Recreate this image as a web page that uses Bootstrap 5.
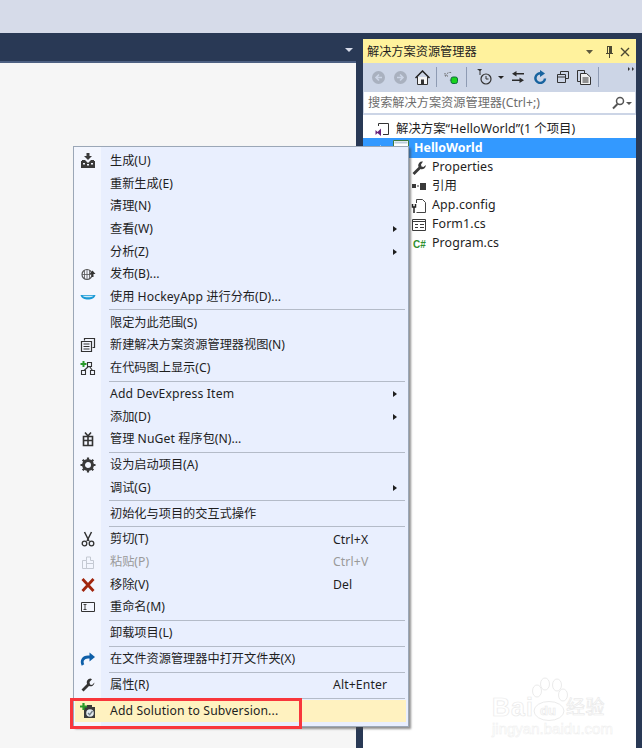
<!DOCTYPE html>
<html lang="zh"><head><meta charset="utf-8"><title>Solution Explorer</title>
<link href="https://cdn.jsdelivr.net/npm/bootstrap@5.3.0/dist/css/bootstrap.min.css" rel="stylesheet">
<style>
html,body{height:748px;width:642px;overflow:hidden;margin:0;background:#293955}
body{font-family:"Noto Sans","Noto Sans CJK SC",sans-serif;font-size:12.2px;color:#1e1e1e;position:relative}
.lat{letter-spacing:.13px}
.top-chrome{height:33px;background:#d6dbe9}
.work{height:715px}
.doc-side{width:356px;margin-right:7px;flex:none}
.doc-tabs{height:27.5px;padding:15px 3px 0 0}
.doc-strip{height:2px;background:#4d6082}
.doc-body{background:#f6f6f6}
.caret-d{width:0;height:0;border-left:4px solid transparent;border-right:4px solid transparent;border-top:4px solid #d6dbe9}
.sol{width:273px;margin:6px 0 0 0;background:#fff;flex:none}
.sol-title{height:24px;background:#fff29d;padding:2px 5px 0 4px;color:#1e1e1e}
.sol-tools{height:28px;background:#ccd5e6;padding:0 0 0 9px}
.sol-tools svg{flex:none}
.tsep{width:1px;height:20px;background:#8e9bb3;flex:none}
.ml-6{margin-left:6px}.ml-7{margin-left:7px}.ml-8{margin-left:8px}.ml-9{margin-left:9px}.ml-10{margin-left:10px}
.grip{align-self:flex-start;margin:4px 2px 0 auto}
.sol-search{height:24px;background:#fff;border:solid #ccd5e6;border-width:1px 1px 2px;padding:1px 2px 0 4px;color:#6d6d6d}
.tree{padding-top:4px}
.trow{height:19px;padding-left:48px;white-space:nowrap;gap:5px;font-size:12.4px}
.trow .lat{letter-spacing:.1px}
.trow.lvl1{padding-left:12px;gap:6px;padding-top:1px}
.trow.sel{background:#3399ff;color:#fff;font-weight:700;padding-left:12px;height:20px}
.trow.sel .lat{letter-spacing:0}
.sel-gap{margin-right:7px}
.ctx{position:absolute;left:73px;top:146px;width:336px;height:581px;background:#e9effe;border:1px solid #9ba7b7;box-shadow:2px 2px 2px rgba(70,70,70,.6);padding:3px 0 0 0}
.ctx::before{content:"";position:absolute;left:0;top:0;bottom:0;width:27px;background:#f3f6fe}
.mi{position:relative;height:22.64px;padding-left:36px;white-space:nowrap;color:#1e1e1e}
.mi .ic{position:absolute;left:6px;top:3px;width:16px;height:16px}
.mi .key{position:absolute;left:259px;top:50%;transform:translateY(-50%)}
.mi .arr{position:absolute;right:11px;top:50%;transform:translateY(-50%);width:0;height:0;border-top:3.5px solid transparent;border-bottom:3.5px solid transparent;border-left:4px solid #1e1e1e}
.mi.off{color:#9a9a9a}
.mi.hot{background:#fff2c0;margin:0 2px 0 1px;padding-left:35px}
.mi.hot .ic{left:5px}
.msep{height:3.28px;padding-top:1px;margin-left:35px;margin-right:3px;position:relative}
.msep::after{content:"";display:block;height:1px;background:#b4bbc8}
.redbox{position:absolute;left:70px;top:698px;width:232px;height:31px;border:3px solid #f8363c;pointer-events:none}
.wm{position:absolute;left:485px;top:675px;width:130px;height:65px;color:#fff}
.wm svg{position:absolute;left:0;top:0}
.wm span{position:absolute;line-height:1;white-space:nowrap;-webkit-text-stroke:.7px #eaeaea}
.wm-bai{left:7px;top:20px;font:700 25px "Liberation Sans",sans-serif;letter-spacing:1px}
.wm-du{left:55px;top:29px;font:700 13px "Liberation Sans",sans-serif}
.wm-jy{left:81px;top:21px;font:400 19px "Noto Sans CJK SC",sans-serif;letter-spacing:.5px}
.wm-url{left:7px;top:46px;font:400 15px "Liberation Sans",sans-serif}
.wm span.wm-url{-webkit-text-stroke:.5px #eeeeee}
</style></head><body>
<div class="top-chrome"></div>
<div class="work d-flex">
  <div class="doc-side d-flex flex-column">
    <div class="doc-tabs d-flex justify-content-end"><span class="caret-d"></span></div>
    <div class="doc-strip"></div>
    <div class="doc-body flex-grow-1"></div>
  </div>
  <div class="sol d-flex flex-column">
    <div class="sol-title d-flex align-items-center">
      <span class="flex-grow-1">解决方案资源管理器</span>
      <svg width="46" height="14" viewBox="0 0 46 14"><path d="M1 5h7l-3.500 4z" fill="#5e5a3e"/><path d="M22 1h5v7h1v1h-3v4h-1V9h-3V8h1zM23 2v6h1V2z" fill="#4d4a33"/><path d="M36 3l8 8M44 3l-8 8" stroke="#4d4a33" stroke-width="1.400"/></svg>
    </div>
    <div class="sol-tools d-flex align-items-center">
      <svg width="13" height="13" viewBox="0 0 13 13"><circle cx="6.500" cy="6.500" r="6.500" fill="#a9b1bf"/><path d="M7 3.500L4 6.500 7 9.500M4.500 6.500H10" stroke="#ccd5e6" stroke-width="1.600" fill="none"/></svg>
      <svg class="ml-9" width="13" height="13" viewBox="0 0 13 13"><circle cx="6.500" cy="6.500" r="6.500" fill="#a9b1bf"/><path d="M6 3.500l3 3-3 3M8.500 6.500H3" stroke="#ccd5e6" stroke-width="1.600" fill="none"/></svg>
      <svg class="ml-8" width="15" height="15" viewBox="0 0 15 15"><path d="M2.500 7v7.500h10V7" fill="#f5f5f5" stroke="#333"/><path d="M6 14.500V9.500h3v5" fill="#333"/><path d="M.5 8L7.500 1l7 7" fill="none" stroke="#222" stroke-width="1.500"/></svg>
      <span class="tsep ml-6"></span>
      <svg class="ml-7" width="14" height="15" viewBox="0 0 14 15"><path d="M2 6a4 4 0 0 1 6-3M1 3v3h3M9 8a3 3 0 0 1-4 2" fill="none" stroke="#666" stroke-dasharray="1.500 1"/><rect x="7" y="7" width="6.500" height="6.500" rx="2" fill="#19d31c" stroke="#0c6d3c"/></svg>
      <span class="tsep ml-8"></span>
      <svg class="ml-10" width="15" height="16" viewBox="0 0 15 16"><circle cx="9" cy="10" r="5" fill="none" stroke="#333" stroke-width="1.200"/><path d="M9 7v3h2.500" stroke="#333" fill="none"/><path d="M0 0h5L3.500 2v4h-1V2z" fill="#333"/></svg>
      <svg class="ml-6" width="6" height="3" viewBox="0 0 6 3"><path d="M0 0h6L3 3z" fill="#222"/></svg>
      <svg class="ml-8" width="12" height="12" viewBox="0 0 12 12"><path d="M4.500 0v2H12v1.500H4.500v2L0 2.700zM7.500 6.500v2H0V10h7.500v2L12 9.200z" fill="#2b2b2b"/></svg>
      <svg class="ml-10" width="13" height="14" viewBox="0 0 13 14"><path d="M11 8.500a4.800 4.800 0 1 1-3.500-5" fill="none" stroke="#17639f" stroke-width="2.500"/><path d="M6 0v7l5-3.500z" fill="#17639f"/></svg>
      <svg class="ml-10" width="12" height="12" viewBox="0 0 12 12"><path d="M3.500 3V.5h8v7H9M.5 3.500h8v8h-8zM.5 6h8" fill="none" stroke="#333"/></svg>
      <svg class="ml-8" width="14" height="15" viewBox="0 0 14 15"><path d="M3 11.500H.5V.5h7V3" fill="none" stroke="#333"/><path d="M3.500 3.500h6l4 3.500v7.500h-10zM5.500 8h6M5.500 10h6M5.500 12h6" fill="#f0f0f0" stroke="#333" stroke-width="1"/></svg>
      <span class="tsep ml-7"></span>
      <svg class="grip" width="6" height="5" viewBox="0 0 6 5"><path d="M0 0l2 2-2 2zM4 0l2 2-2 2z" fill="#333"/></svg>
    </div>
    <div class="sol-search d-flex align-items-center">
      <span class="flex-grow-1">搜索解决方案资源管理器(Ctrl+;)</span>
      <svg width="22" height="14" viewBox="0 0 22 14"><circle cx="9" cy="5" r="3.500" fill="none" stroke="#555" stroke-width="1.500"/><path d="M6.500 8L2 12.500" stroke="#555" stroke-width="2"/><path d="M15 6h6l-3 3z" fill="#555"/></svg>
    </div>
    <div class="tree">
      <div class="trow lvl1 d-flex align-items-center"><svg width="15" height="15" viewBox="0 0 15 15"><path d="M3.500 4V1.500h10v11H8" fill="none" stroke="#333"/><path d="M.5 8l2 2 3.500-3.500V14L2.500 11l-2 2z" fill="#68217a"/></svg><span>解决方案“<span class="lat">HelloWorld</span>”(1 个项目)</span></div>
      <div class="trow sel d-flex align-items-center"><svg class="sel-gap" width="6" height="6" viewBox="0 0 6 6"><path d="M6 0v6H0z" fill="#fff"/></svg><svg width="16" height="16" viewBox="0 0 16 16"><path d="M.5.500h15v15H.5z" fill="#fff" stroke="#3f7a3f"/><path d="M1.500 1.500h13v2h-13z" fill="#bcd"/><text x="3" y="11" font-size="8" font-weight="700" fill="#2f7f2f" font-family="Liberation Sans,sans-serif">C#</text></svg><span class="lat">HelloWorld</span></div>
      <div class="trow d-flex align-items-center"><svg width="16" height="16" viewBox="0 0 16 16"><path d="M12 1.500A4 4 0 0 0 7.500 7L1.500 13 3.500 15 9.500 9A4 4 0 0 0 14.800 5L12.500 7 10.500 6.500 10 4.500z" fill="#3a3a3a"/></svg><span class="lat">Properties</span></div>
      <div class="trow d-flex align-items-center"><svg width="16" height="16" viewBox="0 0 16 16"><path d="M1 5h4v4H1zM6 6.500h2v1H6zM9 4h6v7H9z" fill="#3a3a3a"/></svg><span>引用</span></div>
      <div class="trow d-flex align-items-center"><svg width="16" height="16" viewBox="0 0 16 16"><path d="M5.500 5V1.500h6l3 3v10h-9" fill="#fff" stroke="#444"/><path d="M1.500 6v3h3V6M3 9v6" fill="none" stroke="#222" stroke-width="1.500"/></svg><span class="lat">App.config</span></div>
      <div class="trow d-flex align-items-center"><svg width="16" height="16" viewBox="0 0 16 16"><path d="M1.500 2.500h13v11h-13zM2 4.500h12M4 7.500h3M9 7.500h4M4 10.500h3M9 10.500h4" fill="#fff" stroke="#3a3a3a"/></svg><span class="lat">Form1.cs</span></div>
      <div class="trow d-flex align-items-center"><svg width="16" height="16" viewBox="0 0 16 16"><text x="2" y="12" font-size="10" font-weight="700" fill="#2f8f2f" font-family="Liberation Sans,sans-serif">C#</text></svg><span class="lat">Program.cs</span></div>
    </div>
  </div>
</div>

<div class="ctx">
  <div class="mi d-flex align-items-center"><svg class="ic" viewBox="0 0 16 16"><path d="M6.500 0h3v3H12L8 7 4 3h2.500zM2 7h3l3 3 3-3h3v1h1v7H1V8h1z" fill="#3a3a3a"/><path d="M3 10h2v1.500H3zM7 11h2v1.500H7zM11 10h2v1.500h-2z" fill="#f3f6fe"/></svg><span>生成(U)</span></div>
  <div class="mi d-flex align-items-center"><span>重新生成(E)</span></div>
  <div class="mi d-flex align-items-center"><span>清理(N)</span></div>
  <div class="mi d-flex align-items-center"><span>查看(W)</span><i class="arr"></i></div>
  <div class="mi d-flex align-items-center"><span>分析(Z)</span><i class="arr"></i></div>
  <div class="mi d-flex align-items-center"><svg class="ic" viewBox="0 0 16 16"><circle cx="7" cy="8.500" r="5" fill="none" stroke="#555" stroke-width="1.200"/><path d="M7 3.500v10M2 8.500h10M4.500 4.500v8M9.500 4.500v8" stroke="#555" stroke-width=".8" fill="none"/><path d="M12.500 4.500l3 3.500h-2v3h-2V8h-2z" fill="#333"/></svg><span>发布(B)...</span></div>
  <div class="mi d-flex align-items-center"><svg class="ic" viewBox="0 0 16 16"><path d="M.5 6h15c-1 3.500-4 4.500-7.500 4.500S1.500 9.500.5 6z" fill="#1a9ad6"/><path d="M2.500 6.700h11C12.500 8 10 8.300 8 8.300S3.500 8 2.500 6.700z" fill="#cfeaf8"/></svg><span>使用 <span class="lat">HockeyApp</span> 进行分布(D)...</span></div>
  <div class="msep"></div>
  <div class="mi d-flex align-items-center"><span>限定为此范围(S)</span></div>
  <div class="mi d-flex align-items-center"><svg class="ic" viewBox="0 0 16 16"><path d="M4.500 3.500v-2h10v9h-2" fill="none" stroke="#333" stroke-width="1.200"/><path d="M1.500 4.500h10v10h-10zM3.500 7h6M3.500 9.500h6M3.500 12h6" fill="none" stroke="#333" stroke-width="1.200"/></svg><span>新建解决方案资源管理器视图(N)</span></div>
  <div class="mi d-flex align-items-center"><svg class="ic" viewBox="0 0 16 16"><path d="M3.500 1v6M.5 4h6" stroke="#2a9a2a" stroke-width="2"/><path d="M7.500 2.500h4v4h-4zM1.500 10.500h4v4h-4zM10.500 10.500h4v4h-4zM8.500 6.500L4 10.500M9.500 6.500l3 4" fill="none" stroke="#333" stroke-width="1.100"/></svg><span>在代码图上显示(C)</span></div>
  <div class="msep"></div>
  <div class="mi d-flex align-items-center"><span class="lat">Add DevExpress Item</span><i class="arr"></i></div>
  <div class="mi d-flex align-items-center"><span>添加(D)</span><i class="arr"></i></div>
  <div class="mi d-flex align-items-center"><svg class="ic" viewBox="0 0 16 16"><path d="M3.500 5.500h9v9h-9zM3.500 9.500h9M8 5.500v9" fill="none" stroke="#333" stroke-width="1.600"/><path d="M8 5L5 1.500M8 5l3-3.500" stroke="#333" stroke-width="1.600"/></svg><span>管理 <span class="lat">NuGet</span> 程序包(N)...</span></div>
  <div class="msep"></div>
  <div class="mi d-flex align-items-center"><svg class="ic" viewBox="0 0 16 16"><circle cx="8" cy="8" r="4.500" fill="none" stroke="#3a3a3a" stroke-width="3"/><path d="M8 .5v3M8 12.500v3M.5 8h3M12.500 8h3M2.700 2.700l2 2M11.300 11.300l2 2M2.700 13.300l2-2M11.300 4.700l2-2" stroke="#3a3a3a" stroke-width="2.200"/></svg><span>设为启动项目(A)</span></div>
  <div class="mi d-flex align-items-center"><span>调试(G)</span><i class="arr"></i></div>
  <div class="msep"></div>
  <div class="mi d-flex align-items-center"><span>初始化与项目的交互式操作</span></div>
  <div class="msep"></div>
  <div class="mi d-flex align-items-center"><svg class="ic" viewBox="0 0 16 16"><path d="M4.500 1l4.500 9M11.500 1L7 10" stroke="#333" stroke-width="1.500"/><circle cx="4.500" cy="12.500" r="2.300" fill="none" stroke="#333" stroke-width="1.300"/><circle cx="11.500" cy="12.500" r="2.300" fill="none" stroke="#333" stroke-width="1.300"/></svg><span>剪切(T)</span><span class="key lat">Ctrl+X</span></div>
  <div class="mi off d-flex align-items-center"><svg class="ic" viewBox="0 0 16 16"><path d="M2.500 6.500h4v8h-4zM6.500 9.500h7v5h-7zM6.500 6.500V3h4v3.500h3v3" fill="none" stroke="#c4c9d2"/></svg><span>粘贴(P)</span><span class="key lat">Ctrl+V</span></div>
  <div class="mi d-flex align-items-center"><svg class="ic" viewBox="0 0 16 16"><path d="M2.500 2l11 12M13.500 2l-11 12" stroke="#a1260d" stroke-width="2.800"/></svg><span>移除(V)</span><span class="key lat">Del</span></div>
  <div class="mi d-flex align-items-center"><svg class="ic" viewBox="0 0 16 16"><path d="M1.500 3.500h13v9h-13z" fill="none" stroke="#333"/><path d="M3.500 5.500h3M3.500 10.500h3M5 5.500v5" stroke="#333" stroke-width=".9"/></svg><span>重命名(M)</span></div>
  <div class="msep"></div>
  <div class="mi d-flex align-items-center"><span>卸载项目(L)</span></div>
  <div class="msep"></div>
  <div class="mi d-flex align-items-center"><svg class="ic" viewBox="0 0 16 16"><path d="M3 14c-2-4 0-8 5-8h2" fill="none" stroke="#0e5fa8" stroke-width="2.800"/><path d="M9.500 1.500L15 6l-5.500 4.500z" fill="#0e5fa8"/></svg><span>在文件资源管理器中打开文件夹(X)</span></div>
  <div class="msep"></div>
  <div class="mi d-flex align-items-center"><svg class="ic" viewBox="0 0 16 16"><path d="M10.500 1.500A4 4 0 0 0 7 7L1.500 12.500 3.500 14.500 9 9a4 4 0 0 0 5.500-3.500L12 8 10 7.500 9.500 5l2.500-2.800z" fill="#333"/></svg><span>属性(R)</span><span class="key lat">Alt+Enter</span></div>
  <div class="msep"></div>
  <div class="mi hot d-flex align-items-center"><svg class="ic" viewBox="0 0 16 16"><path d="M4 4h3V2h5v2h3v11H4z" fill="#3a3a3a"/><path d="M3.500 0v7M0 3.500h7" stroke="#2a9a2a" stroke-width="2.200"/><circle cx="10" cy="10" r="3.800" fill="#e3e9ee"/><path d="M8 10l1.700 1.700L12.500 8" fill="none" stroke="#6f7b86" stroke-width="1.300"/></svg><span class="lat">Add Solution to Subversion...</span></div>
</div>

<div class="redbox"></div>
<div class="wm">
  <svg width="130" height="65" viewBox="0 0 130 65" fill="none" stroke="#ebebeb" stroke-width="1"><ellipse cx="64" cy="36" rx="15" ry="9.500" fill="#fff"/><ellipse cx="52" cy="16" rx="4.500" ry="6"/><ellipse cx="60" cy="9" rx="4.500" ry="6"/><ellipse cx="72" cy="10" rx="4.500" ry="6"/><ellipse cx="78" cy="20" rx="4.500" ry="6"/></svg>
  <span class="wm-bai">Bai</span><span class="wm-du">du</span><span class="wm-jy">经验</span><span class="wm-url">jingyan.baidu.com</span>
</div>
</body></html>
